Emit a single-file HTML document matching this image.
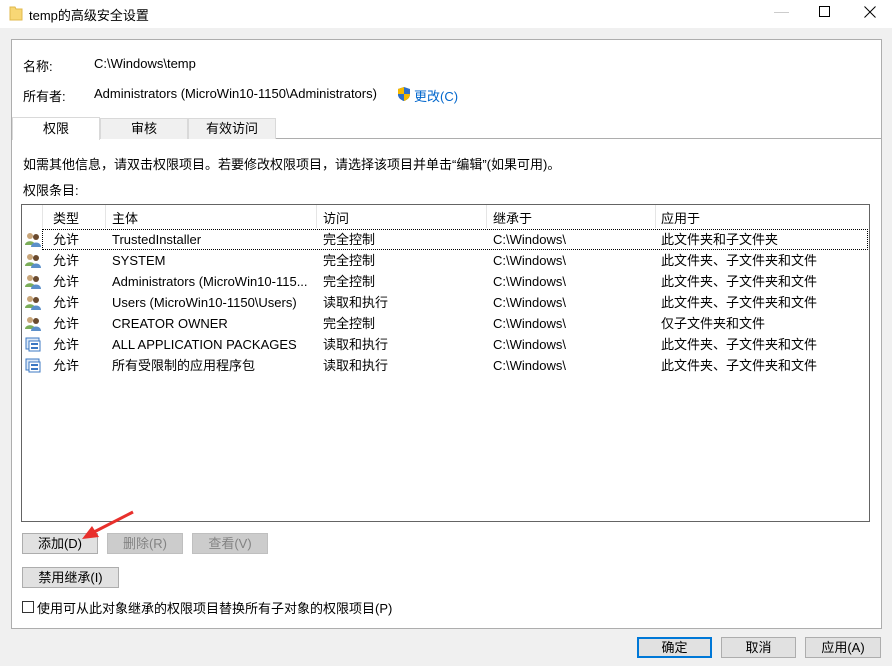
<!DOCTYPE html>
<html><head><meta charset="utf-8"><style>
*{margin:0;padding:0;box-sizing:border-box}
body{width:892px;height:666px;background:#f0f0f0;font-family:"Liberation Sans","Noto Sans CJK SC",sans-serif;font-size:13px;color:#000;position:relative;overflow:hidden}
.a{position:absolute;white-space:nowrap}
.btn{position:absolute;height:21px;border:1px solid #adadad;background:#e1e1e1;text-align:center;line-height:19px;font-size:13px}
.dis{color:#838383;background:#cccccc;border-color:#bfbfbf}
.row{position:absolute;left:22px;width:846px;height:21px;line-height:21px}
.row span{position:absolute}
</style></head><body>
<div class="a" style="left:0;top:0;width:892px;height:28px;background:#fff"></div>
<svg class="a" style="left:9px;top:5px" width="14" height="16"><path d="M1 2h5l1 2h6v11H1z" fill="#f8d775" stroke="#e0b84c"/></svg>
<div class="a" style="left:29px;top:5px;font-size:13px">temp的高级安全设置</div>
<div class="a" style="left:774px;top:12px;width:15px;height:1px;background:#ccc"></div>
<div class="a" style="left:819px;top:6px;width:11px;height:11px;border:1px solid #000"></div>
<svg class="a" style="left:864px;top:6px" width="12" height="12"><path d="M0.5 0.5L11.5 11.5M11.5 0.5L0.5 11.5" stroke="#000"/></svg>

<div class="a" style="left:11px;top:39px;width:871px;height:590px;background:#fff;border:1px solid #adadad"></div>
<div class="a" style="left:23px;top:56px">名称:</div>
<div class="a" style="left:94px;top:56px">C:\Windows\temp</div>
<div class="a" style="left:23px;top:86px">所有者:</div>
<div class="a" style="left:94px;top:86px">Administrators (MicroWin10-1150\Administrators)</div>
<svg class="a" style="left:397px;top:86px" width="14" height="16"><path d="M7 1L13 3V8C13 12 10 14 7 15C4 14 1 12 1 8V3Z" fill="#2f6fc6"/><path d="M7 1V8H13C13 12 10 14 7 15Z" fill="#f5b800"/><path d="M7 8H1V3L7 1Z" fill="#f5b800"/><path d="M7 8H1C1 12 4 14 7 15Z" fill="#2f6fc6"/></svg>
<div class="a" style="left:414px;top:86px;color:#0066cc">更改(C)</div>

<div class="a" style="left:11px;top:138px;width:871px;height:1px;background:#adadad"></div>
<div class="a" style="left:100px;top:118px;width:88px;height:21px;background:#f0f0f0;border:1px solid #d9d9d9;border-bottom:none;text-align:center;line-height:20px">审核</div>
<div class="a" style="left:188px;top:118px;width:88px;height:21px;background:#f0f0f0;border:1px solid #d9d9d9;border-bottom:none;text-align:center;line-height:20px">有效访问</div>
<div class="a" style="left:12px;top:117px;width:88px;height:23px;background:#fff;border:1px solid #d9d9d9;border-bottom:none;text-align:center;line-height:22px">权限</div>

<div class="a" style="left:23px;top:154px">如需其他信息，请双击权限项目。若要修改权限项目，请选择该项目并单击“编辑”(如果可用)。</div>
<div class="a" style="left:23px;top:180px">权限条目:</div>

<div class="a" style="left:21px;top:204px;width:849px;height:318px;border:1px solid #646464;background:#fff"></div>
<div class="a" style="left:42px;top:205px;width:1px;height:23px;background:#e5e5e5"></div>
<div class="a" style="left:105px;top:205px;width:1px;height:23px;background:#e5e5e5"></div>
<div class="a" style="left:316px;top:205px;width:1px;height:23px;background:#e5e5e5"></div>
<div class="a" style="left:486px;top:205px;width:1px;height:23px;background:#e5e5e5"></div>
<div class="a" style="left:655px;top:205px;width:1px;height:23px;background:#e5e5e5"></div>
<div class="a" style="left:53px;top:208px">类型</div>
<div class="a" style="left:112px;top:208px">主体</div>
<div class="a" style="left:323px;top:208px">访问</div>
<div class="a" style="left:493px;top:208px">继承于</div>
<div class="a" style="left:661px;top:208px">应用于</div>
<div class="a" style="left:42px;top:229px;width:826px;height:21px;border:1px dotted #000"></div>

<svg width="0" height="0" style="position:absolute"><defs>
<g id="u"><circle cx="5" cy="4" r="3" fill="#c9a67a"/><path d="M0 13C0 8 10 8 10 13Z" fill="#7cae5a"/><circle cx="11" cy="5" r="3" fill="#6a4a2e"/><path d="M6 15C6 9 16 9 16 15Z" fill="#5b8fc9"/></g>
<g id="p"><rect x="1" y="1" width="13" height="11" fill="#dbe8f7" stroke="#3c78c3"/><rect x="4" y="4" width="11" height="10" fill="#fff" stroke="#3c78c3"/><rect x="6" y="6" width="7" height="2" fill="#3c78c3"/><rect x="6" y="10" width="7" height="2" fill="#3c78c3"/></g>
</defs></svg>

<div class="row" style="top:229px"><svg style="position:absolute;left:3px;top:3px" width="16" height="16"><use href="#u"/></svg><span style="left:31px">允许</span><span style="left:90px">TrustedInstaller</span><span style="left:301px">完全控制</span><span style="left:471px">C:\Windows\</span><span style="left:639px">此文件夹和子文件夹</span></div>
<div class="row" style="top:250px"><svg style="position:absolute;left:3px;top:3px" width="16" height="16"><use href="#u"/></svg><span style="left:31px">允许</span><span style="left:90px">SYSTEM</span><span style="left:301px">完全控制</span><span style="left:471px">C:\Windows\</span><span style="left:639px">此文件夹、子文件夹和文件</span></div>
<div class="row" style="top:271px"><svg style="position:absolute;left:3px;top:3px" width="16" height="16"><use href="#u"/></svg><span style="left:31px">允许</span><span style="left:90px">Administrators (MicroWin10-115...</span><span style="left:301px">完全控制</span><span style="left:471px">C:\Windows\</span><span style="left:639px">此文件夹、子文件夹和文件</span></div>
<div class="row" style="top:292px"><svg style="position:absolute;left:3px;top:3px" width="16" height="16"><use href="#u"/></svg><span style="left:31px">允许</span><span style="left:90px">Users (MicroWin10-1150\Users)</span><span style="left:301px">读取和执行</span><span style="left:471px">C:\Windows\</span><span style="left:639px">此文件夹、子文件夹和文件</span></div>
<div class="row" style="top:313px"><svg style="position:absolute;left:3px;top:3px" width="16" height="16"><use href="#u"/></svg><span style="left:31px">允许</span><span style="left:90px">CREATOR OWNER</span><span style="left:301px">完全控制</span><span style="left:471px">C:\Windows\</span><span style="left:639px">仅子文件夹和文件</span></div>
<div class="row" style="top:334px"><svg style="position:absolute;left:3px;top:3px" width="16" height="16"><use href="#p"/></svg><span style="left:31px">允许</span><span style="left:90px">ALL APPLICATION PACKAGES</span><span style="left:301px">读取和执行</span><span style="left:471px">C:\Windows\</span><span style="left:639px">此文件夹、子文件夹和文件</span></div>
<div class="row" style="top:355px"><svg style="position:absolute;left:3px;top:3px" width="16" height="16"><use href="#p"/></svg><span style="left:31px">允许</span><span style="left:90px">所有受限制的应用程序包</span><span style="left:301px">读取和执行</span><span style="left:471px">C:\Windows\</span><span style="left:639px">此文件夹、子文件夹和文件</span></div>

<div class="btn" style="left:22px;top:533px;width:76px">添加(D)</div>
<div class="btn dis" style="left:107px;top:533px;width:76px">删除(R)</div>
<div class="btn dis" style="left:192px;top:533px;width:76px">查看(V)</div>
<div class="btn" style="left:22px;top:567px;width:97px">禁用继承(I)</div>
<svg class="a" style="left:80px;top:510px" width="56" height="36"><path d="M53 2L14 22" stroke="#e8302c" stroke-width="3"/><path d="M2 29L12 16L19 27Z" fill="#e8302c"/></svg>
<div class="a" style="left:22px;top:601px;width:12px;height:12px;border:1px solid #333;background:#fff"></div>
<div class="a" style="left:37px;top:598px">使用可从此对象继承的权限项目替换所有子对象的权限项目(P)</div>

<div class="btn" style="left:637px;top:637px;width:75px;border:2px solid #0078d7;line-height:17px">确定</div>
<div class="btn" style="left:721px;top:637px;width:75px">取消</div>
<div class="btn" style="left:805px;top:637px;width:76px">应用(A)</div>
</body></html>
